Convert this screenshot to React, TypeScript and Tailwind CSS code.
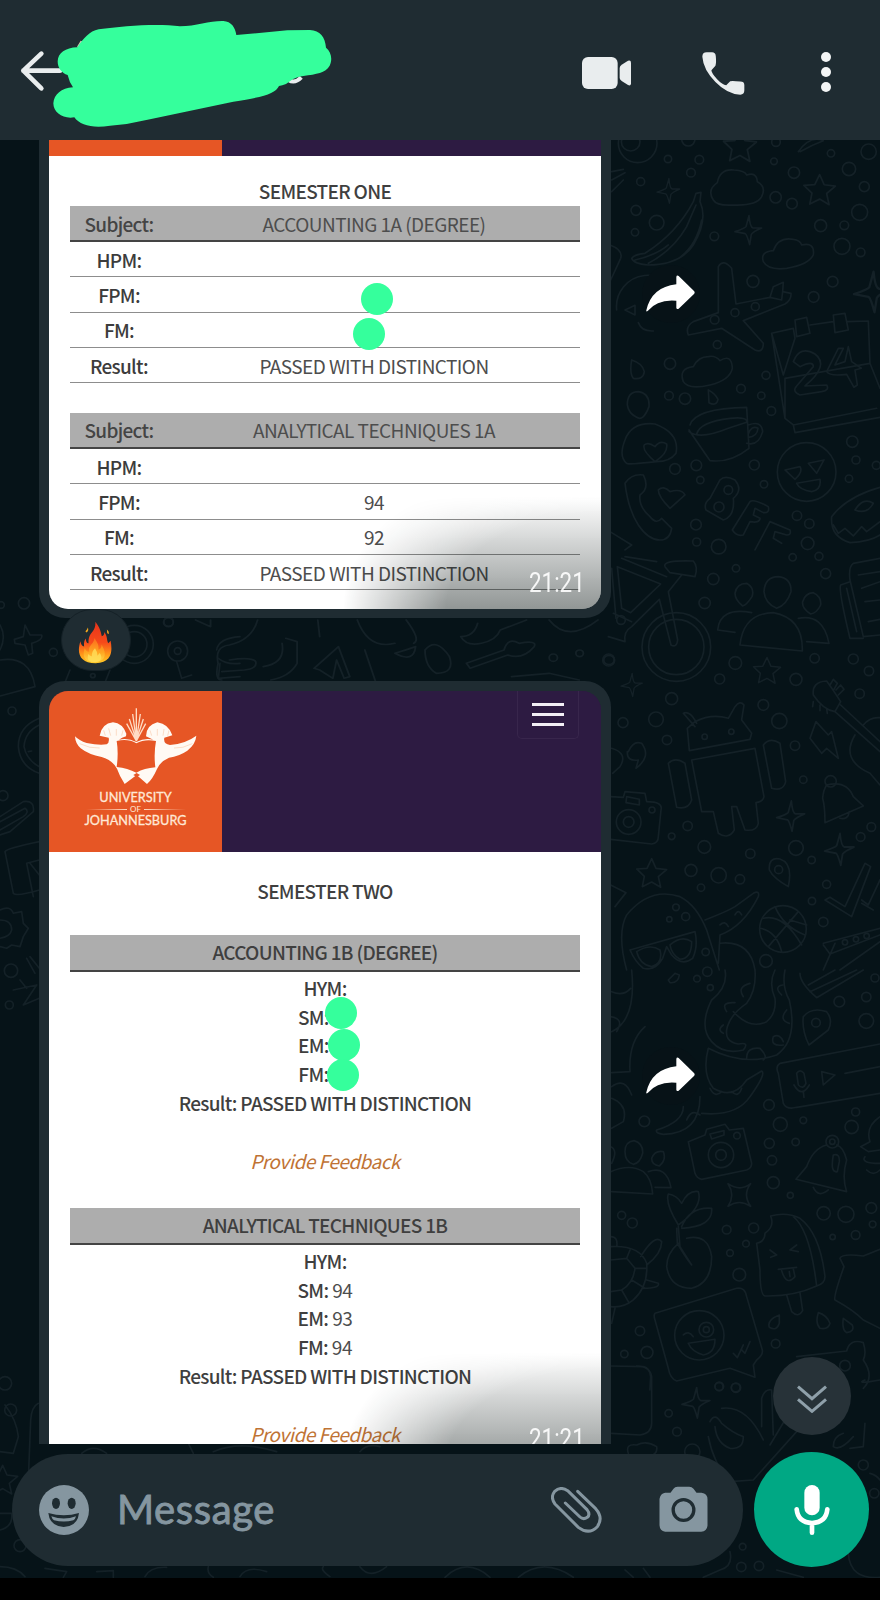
import React from "react";

const LABEL = "font-['Noto_Sans_CJK_SC','Noto_Sans',sans-serif]";

function Wallpaper() {
  const ring = (c: number[], i: number) => <circle key={i} cx={c[0]} cy={c[1]} r={c[2]} />;
  const sparkle = (c: number[], i: number) => (
    <path key={i} transform={`translate(${c[0]} ${c[1]}) scale(${c[2]})`} d="M2-45Q5-10 14-8L40-8Q14 3 9 11L4 42Q-4 12-9 9L-40 3Q-10-7-7-12Z" />
  );
  const star = (c: number[], i: number) => (
    <path key={i} transform={`translate(${c[0]} ${c[1]}) scale(${c[2]})`} d="M0-44L13-15 45-11 20 10 27 42 0 26-28 40-22 9-45-13-14-15Z" />
  );
  return (
    <svg className="absolute inset-0 h-[1578px] w-[880px]" viewBox="0 0 880 1578" fill="none" stroke="#142127" strokeWidth="5" strokeLinecap="round" strokeLinejoin="round">
      <g transform="translate(600 130) scale(.3333)">
        {[[113,40,58],[92,35,28],[265,28,20],[204,87,11],[298,89,13],[273,128,13],[122,155,12],[108,241,15],[170,278,22],[105,307,11],[343,319,13],[527,202,17],[576,221,16],[582,128,17],[522,94,10],[528,36,13],[693,70,11],[806,65,23],[747,117,20],[793,170,15],[779,247,24],[662,287,18],[733,286,13],[726,349,24],[782,367,13],[459,454,18],[698,455,16],[641,501,16],[466,530,12],[405,548,12],[344,569,13],[352,644,12],[210,701,17],[498,736,12],[423,776,13],[484,797,11],[514,843,13],[207,797,13],[255,806,17],[757,935,17],[768,990,12],[747,1046,11],[829,1006,12],[463,1005,15],[289,1006,16],[225,1017,16],[301,1050,11],[492,1063,11],[288,1184,16],[290,1236,12],[591,1157,14],[628,1181,14],[623,1240,19],[356,1250,22],[620,1026,88],[385,1080,13],[357,1131,15]].map(ring)}
        {[[205,184,.85],[445,302,1],[818,488,1.4]].map(sparkle)}
        {[[420,48,1.1],[659,180,1.05]].map(star)}
        <path d="M340 210Q320 180 352 158Q360 115 402 120Q435 122 440 135Q470 125 472 155Q500 170 485 200Q470 228 400 225Q350 228 340 210ZM490 395Q480 365 520 362Q535 320 580 328Q600 330 605 345Q645 335 640 375Q625 405 560 415Q505 422 490 395ZM250 755Q235 715 280 710Q295 680 325 680Q345 675 360 692Q395 670 397 715Q390 750 330 765Q265 780 250 755Z" />
        <path d="M288 190L303 187 300 215Q325 270 280 345Q240 405 145 405Q100 402 95 385Q102 373 135 370Q230 310 280 215ZM145 400Q220 360 260 290L288 225M105 390Q170 375 205 345M240 382Q290 345 305 270" />
        <path d="M355 548L355 410Q370 385 395 415L408 522 510 502 520 470 550 457 548 485 573 490Q575 510 555 522L430 572 490 640Q490 670 465 660L365 595 265 615Q255 590 280 575ZM510 502L545 510 548 485" />
        <path d="M50 540A93 93 0 1 1 237 520M115 578Q125 605 160 603M75 540L105 526 105 555ZM30 345Q70 360 62 385L32 450M95 690Q88 730 100 745Q130 750 133 725Q128 700 95 690ZM82 825Q82 785 115 785Q150 790 147 830Q130 875 110 862Q85 850 82 825ZM325 780L327 818Q350 830 354 808Q345 790 325 780Z" />
        <path d="M515 610L580 595 585 625 550 735ZM585 570L620 562 630 610 590 620ZM630 585L700 575M700 555L735 550 745 600 705 608ZM742 575L805 573 810 700 555 745 555 865 580 885 830 835M515 610L555 865M580 885L585 908 840 862M810 700L840 775" />
        <path d="M580 695Q600 645 645 672Q690 705 615 768L680 765Q690 780 665 785L600 795Q575 785 590 768L640 710Q640 690 600 710ZM715 655L680 725Q690 740 740 733L762 772 772 765 765 720 784 715 755 695 745 650 735 695 705 705 730 655Z" />
        <path d="M270 885Q285 835 440 832L447 955Q390 1000 330 992Q270 905 267 900M267 905Q300 930 385 895L440 877Q445 860 390 865Q300 875 290 912M445 885Q485 870 488 905Q475 950 440 940M445 912Q455 885 474 895Q472 920 445 922" />
        <path d="M80 1000Q55 980 75 930Q95 875 165 882Q240 910 228 970Q210 995 170 995Q80 1005 80 1000ZM165 995Q125 960 133 945Q145 935 165 950Q180 930 200 942Q205 970 165 995ZM75 1060Q95 1030 130 1035Q150 1075 120 1095Q115 1130 150 1160Q170 1185 185 1165L215 1195Q210 1230 180 1230Q145 1230 115 1185Q85 1140 75 1060ZM175 1080Q190 1065 210 1085Q245 1075 255 1095L210 1135Q175 1100 175 1080Z" />
        <path d="M555 1020L600 1010Q610 1025 585 1048ZM625 1000L672 990 650 1030ZM590 1060L660 1048Q665 1080 635 1085Q600 1080 590 1060ZM360 1050Q375 1035 405 1050Q430 1080 400 1105Q405 1160 370 1170L318 1140Q310 1120 330 1105ZM450 1115Q460 1105 505 1130Q510 1150 490 1148L465 1135 460 1155 480 1165Q480 1180 450 1175L430 1215Q410 1220 397 1200ZM510 1175L570 1200Q575 1215 560 1215L525 1205 520 1225 545 1240M510 1175L465 1260M840 1072Q740 1100 695 1160Q690 1220 750 1238Q810 1235 840 1215M700 1185L715 1210 735 1195 760 1218 785 1190 800 1205 840 1175M765 1140Q790 1100 820 1120Q800 1155 765 1140M30 1205L95 1245 75 1260M595 65Q630 15 670 32Q635 45 600 65M35 125L70 118M35 150L75 128M35 185L70 150" />
      </g>
      <g transform="translate(600 550) scale(.3333)">
        {[[340,87,17],[314,159,17],[408,55,11],[578,22,11],[657,19,12],[677,71,15],[26,330,18],[215,446,18],[406,339,19],[359,387,15],[588,388,18],[644,325,14],[760,327,15],[807,363,14],[779,431,14],[490,465,16],[168,508,22],[69,518,15],[201,570,14],[538,513,23],[585,587,14],[610,689,11],[313,891,19],[263,828,14],[215,859,10],[451,911,14],[588,894,22],[635,930,11],[273,961,18],[356,976,23],[420,988,14],[303,1013,11],[782,861,13],[814,831,13],[680,1003,12],[636,1053,11],[670,1116,14],[228,1072,10],[257,1100,12],[208,1108,8],[317,1206,11],[498,1233,19],[229,291,103],[229,291,83],[86,816,37],[86,816,16],[156,780,9],[314,560,8],[394,545,8],[536,959,12],[549,1137,70],[692,694,17],[735,1177,8],[768,1168,8],[800,1158,8],[63,210,13]].map(ring)}
        {[[95,406,.8],[572,800,1.05],[718,900,1.1]].map(sparkle)}
        {[[501,362,.9],[155,970,1]].map(star)}
        <path d="M52 50L182 102 92 188 65 175ZM35 55L48 205M65 25L200 80M195 50Q185 30 280 33Q295 50 285 80L210 68ZM245 75L205 125 233 270Q230 295 213 285L178 148 95 230Q70 245 75 275L25 260M40 190L95 215M75 20L170 35" />
        <path d="M405 130Q410 100 440 100Q465 115 456 140Q440 165 428 168Q405 150 405 130ZM492 125Q495 80 535 80Q575 85 573 125Q560 165 530 175Q495 160 492 125ZM608 155Q615 130 640 128Q665 140 662 165Q650 190 632 192Q605 175 608 155ZM420 285Q430 190 520 188Q610 205 607 303ZM405 247L353 240Q360 170 455 188M595 205Q670 190 687 280L620 275M840 25L760 40Q745 50 750 90L790 260 840 255M750 95L722 105Q715 120 750 265L790 265M740 115L770 245M775 75L840 65M785 115L840 95M795 155L840 150M805 215L840 208" />
        <path d="M262 535L285 515Q335 490 385 505L405 470Q420 450 432 465L425 510 455 550 450 568 268 602ZM285 530L250 490Q270 480 290 520M275 630L465 595 492 740Q490 755 468 758L475 820Q470 845 435 840L410 770 395 770 403 840Q385 870 355 850L340 785 305 785ZM205 640Q225 620 255 640L275 750Q265 780 230 772ZM490 585Q510 560 540 580L557 695Q550 725 515 715ZM85 605Q100 570 125 580Q155 620 108 655L115 630Q80 635 82 605M35 595Q85 610 60 650L38 670M32 740L70 742 75 725 135 730 140 755Q190 755 183 780L175 860Q175 880 155 882L32 868M80 740L118 748 118 765 78 758Z" />
        <path d="M640 435Q635 395 680 393Q700 420 722 455L705 485Q670 480 640 435ZM722 465L840 575M705 485L840 605M690 405L700 388 712 400 702 418M708 420L722 405 732 418 715 435M640 455L638 470M660 465L660 482M680 475L682 490M790 525Q810 500 840 503M765 555Q720 630 810 670L840 705M648 515L685 555 695 545 715 625 680 595 665 610 630 565ZM680 705Q740 690 760 740L790 768 675 818Q675 770 668 745Q670 720 680 705M720 805Q745 810 748 785M675 1050L690 1042 735 1070 795 940 812 950 755 1100ZM785 1050L805 1065 840 990M785 1060L820 1080" />
        <path d="M80 1260Q50 1150 80 1095Q150 1010 240 1040Q290 1065 320 1140L358 1260M90 1200L285 1145Q295 1190 278 1225Q245 1250 215 1215L200 1190 188 1225Q165 1265 130 1255Q105 1235 90 1200M110 1205Q150 1180 180 1200Q190 1240 155 1250Q120 1245 110 1205M210 1185Q245 1155 275 1175Q275 1225 240 1228Q215 1215 210 1185M315 1110Q380 1085 405 1070L460 1030Q480 1020 475 1040Q430 1130 360 1155L355 1240M360 1125Q375 1110 385 1130M405 1095Q415 1075 425 1095M360 1180Q450 1170 465 1260M490 1105Q550 1090 605 1185M525 1070Q550 1130 615 1155M482 1135Q530 1145 545 1205M595 1085L505 1190M570 1110L620 1125M670 1180L840 1135M670 1185L690 1212 840 1155M705 1180L670 1260M720 1260L840 1175M508 960Q505 920 540 927Q580 940 565 1010Q520 985 508 960M32 1005L78 1028 45 1070" />
      </g>
      <g transform="translate(600 970) scale(.3333)">
        {[[322,5,14],[291,26,10],[331,53,9],[825,24,12],[718,95,16],[799,81,14],[799,153,22],[648,158,13],[507,405,16],[541,463,21],[610,451,10],[767,426,12],[755,471,20],[508,520,15],[587,516,11],[516,571,14],[520,638,18],[571,676,9],[133,454,16],[363,555,38],[363,555,16],[411,497,10],[697,515,19],[697,515,8],[671,730,20],[738,733,24],[814,714,16],[818,763,10],[767,795,13],[698,801,8],[461,774,15],[380,779,13],[438,821,10],[390,849,10],[418,914,19],[65,736,12],[97,759,15],[120,1083,14],[141,1147,18],[73,1152,11],[527,1121,13],[298,1096,74],[319,1079,22],[319,1079,9],[357,1250,12],[407,1253,13],[735,1187,16]].map(ring)}
        <path transform="translate(418 675) rotate(45)" d="M0-48Q5-8 48 0Q8 8 0 48Q-8 8-48 0Q-5-8 0-48Z" />
        <path d="M375 0Q385 50 335 90Q295 170 335 215Q370 255 430 240Q450 215 415 222Q370 215 382 170Q395 130 440 100Q470 60 465 0M525 0Q505 40 525 85Q530 130 500 155Q450 180 400 125M555 0Q545 50 568 90Q595 210 530 255Q430 290 325 235Q305 310 340 355Q400 390 440 330L485 303Q500 310 450 380Q410 440 305 430M430 80Q410 50 450 40M380 125Q360 95 405 98M370 190Q350 180 370 165M545 75Q520 50 548 45M568 160Q535 150 560 120M550 225Q510 230 520 200Q540 190 550 215M440 265Q440 230 480 235Q505 260 490 270M330 355Q345 385 365 365M395 365Q415 385 425 355M95 0Q110 150 35 185M35 65Q70 80 92 55M30 140Q75 145 50 185M135 170Q85 215 90 305L35 308M35 350Q75 320 95 375M35 385Q85 405 70 455L35 475M300 380Q300 490 190 493Q165 490 170 480Q250 455 250 410M260 450Q275 415 300 435" />
        <path d="M600 10Q600 40 650 83L790 0M630 65L770 0M625 45L705 0M610 140Q635 110 680 125Q700 150 685 180L627 225Q605 180 610 140M840 222L540 280Q525 290 535 310L550 400Q560 420 590 412L840 370M590 310Q600 295 612 310L618 340Q610 360 595 345ZM582 345Q605 385 628 345M610 365L612 382M665 305L705 315 670 345ZM735 310L840 290M265 515L315 495 320 478 375 463 388 480 430 475 455 580Q455 595 440 600L305 628Q290 625 285 610ZM330 492L372 482 372 495 335 507ZM680 525Q640 535 620 590L588 628 740 665Q725 620 740 570Q730 530 710 525M640 652Q655 685 685 660M700 555Q720 550 718 575L712 605Q690 610 700 555M840 440Q795 470 810 515L782 530 805 545 840 540M795 560Q780 580 840 580M800 600Q820 620 840 600" />
        <path d="M75 545Q75 515 102 512Q130 520 128 550Q120 580 100 583Q75 575 75 545ZM155 565Q165 540 190 545Q200 570 178 588Q155 585 155 565ZM32 605Q90 580 130 605Q155 625 158 672L35 665M145 605Q200 585 213 653L165 652M32 530Q55 540 35 580M235 765Q195 700 205 672Q230 675 245 700Q265 660 295 665Q310 710 235 765ZM245 770Q270 710 335 715Q340 770 245 775M235 770L240 830 275 885M230 775L232 820Q255 860 275 885M235 820Q200 850 200 890Q210 955 275 955Q335 940 335 860Q325 790 260 805M470 820Q495 815 495 790Q525 770 512 738Q560 725 600 745Q660 790 675 920Q675 940 650 948Q580 980 495 978Q480 975 480 900ZM580 740Q630 780 650 948M560 975L575 1025Q595 1045 608 1022L600 968M510 840L530 855 512 862M590 825L570 840 595 845M535 898L590 892M545 902Q560 950 585 920L580 897M568 905L570 920" />
        <path d="M840 838L790 858Q725 850 720 865L732 890Q700 980 705 990Q760 1020 790 1050L840 1075M32 830Q120 825 140 880Q145 950 100 990Q70 1015 32 1010M32 870L80 865 105 895Q100 940 65 960L32 965M80 865L90 840M105 895L140 895M95 930L135 955M65 960L85 995M122 860Q165 790 185 815Q185 850 140 885M140 930L175 940Q180 955 130 955M32 800Q55 800 50 830M45 1015L35 1060M165 1030L410 955Q435 950 440 980L487 1140Q490 1155 470 1170L460 1185 465 1222 390 1195 230 1233Q210 1225 205 1195L165 1050Q160 1035 165 1030ZM265 1120L345 1108Q345 1150 310 1155Q275 1145 265 1120M250 1095Q265 1080 280 1100M400 1150L412 1163 430 1125M425 1140L435 1150 450 1115M538 1035Q500 1050 508 1072Q530 1085 538 1060ZM655 1028Q645 1060 660 1075Q685 1080 690 1060Q680 1035 655 1028ZM730 1045Q725 1080 740 1088Q765 1085 757 1065ZM590 1160L740 1143Q750 1105 790 1118Q800 1150 790 1170Q825 1220 790 1255M32 1188L130 1190Q150 1195 152 1220L150 1260M205 30L225 10 238 15Q235 40 210 38Z" />
      </g>
      <g transform="translate(440 1340) scale(.3333)">
        {[[686,220,11],[711,275,13],[838,139,13],[888,143,14],[757,335,23],[1270,375,15],[1303,460,14],[908,620,10],[904,681,14],[957,678,14]].map(ring)}
        {[[768,190,1.05]].map(sparkle)}
        <path d="M515 280L600 285Q635 280 635 250L635 110Q630 78 590 78M810 245Q825 215 845 250Q880 280 910 290Q910 330 870 325Q830 310 825 260M805 290Q820 370 870 425L940 420 1070 275M845 205Q920 195 970 300M965 260L965 175Q975 145 995 150L1000 285M1035 240L990 315M1110 500Q1130 480 1220 475M565 340Q555 310 590 315Q620 300 650 320Q655 345 620 350M1275 120Q1250 130 1290 125L1320 120M1290 400Q1310 405 1320 420M1225 640Q1230 720 1320 712M870 635Q880 680 840 690L790 712M1240 290Q1200 335 1180 320 1180 290 1210 280M1275 250L1270 320 1230 325M555 690L580 712M610 685L630 712M15 712Q80 650 150 712M235 712Q310 650 400 712M1010 690L1090 712" />
      </g>
      <g transform="translate(0 600) scale(.3333)">
        {[[72,10,17],[3,15,10],[160,157,12],[36,333,12],[9,587,15],[33,1112,20],[28,1215,12],[403,133,57],[403,133,38],[533,153,30],[533,153,10],[506,65,14]].map(ring)}
        <path d="M75 75L90 105 125 105Q130 120 95 130L98 160 85 165 75 135 45 130 43 118 70 110ZM0 75Q20 110 0 150M0 180Q90 165 105 260L0 288M118 355Q55 380 55 440Q60 500 118 520M118 375Q75 395 72 440Q80 480 118 500M85 455L95 453M0 650L70 605Q105 600 100 635L30 695 0 705M0 665L75 625Q90 635 70 650L0 690M15 755Q20 745 118 725M15 755L40 880Q50 890 118 870M118 780L80 790 100 890M90 790L118 825M0 930Q30 915 40 940L65 935 70 970 85 985 70 1010 60 1040 35 1035 20 1045 0 1040M0 960Q35 960 35 990Q30 1010 0 1015M80 1075L105 1120M90 1070L118 1105M40 1170L110 1155 70 1215 118 1195M60 1140L80 1165M530 185L545 235 575 225M210 210L190 260M330 210L310 260M650 150Q655 115 720 110M655 175Q680 195 720 190M660 190L655 235 720 230" />
      </g>
      <g transform="translate(30 390) scale(.3762 .3333)">
        <path d="M440 690L480 710 480 690M500 820Q490 770 530 765Q590 750 605 690M500 820Q490 870 510 870M530 810Q590 800 600 815 605 835 570 840L510 845M620 830Q680 820 670 760M680 745L710 755 710 820Q690 860 640 870M765 690L770 740M755 835L820 770 850 860 835 865 815 810 805 865 770 840ZM870 690Q900 780 970 760M890 780L920 880M1000 690Q1040 750 1020 760M970 790Q1000 780 1025 770Q1020 820 970 790M1050 780Q1080 740 1115 800Q1130 850 1080 850 1050 830 1050 780M1145 740Q1160 770 1200 760Q1240 750 1250 720L1320 690M1145 740Q1180 740 1190 700M1160 820L1260 780Q1270 740 1300 760Q1350 750 1340 770Q1310 810 1270 795L1170 835ZM1380 690Q1430 760 1510 690M1280 860L1380 850 1460 870" />
        {[[1391,803,11],[1461,790,10],[1539,810,14],[368,697,13],[167,857,6]].map(ring)}
      </g>
      <g transform="translate(0 1380) scale(.3333)">
        {[[32,90,18],[60,497,18],[15,10,20]].map(ring)}
        {[[8,300,1]].map(star)}
        <path d="M15 75Q50 120 55 170L40 220 0 215M115 70Q95 80 92 120L85 300M0 400L35 400Q40 440 0 450M245 220Q280 190 320 220M560 180L580 220M640 215Q720 180 830 215M1080 215Q1100 190 1140 200M0 560Q50 560 75 590M135 565L200 575 190 592M290 575L340 572 340 592M625 560Q620 580 640 592M720 590Q740 555 800 575M435 590Q450 560 500 562M990 590Q960 570 970 560M1080 560Q1110 600 1160 560" />
      </g>
    </svg>
  );
}

function Header() {
  return (
    <header className="relative flex h-[140px] shrink-0 items-center bg-[#1f2c32]">
      <svg className="h-[140px] w-[440px] shrink-0" viewBox="0 0 1320 420" fill="none">
        <path d="M180 212H70M124 161L70 212L124 265" stroke="#e9edee" strokeWidth="14" strokeLinecap="round" strokeLinejoin="round" />
        <path d="M231 140L242 122 250 125 238 142Z" fill="#e3c3b4" />
        <path d="M866 240Q884 252 904 232" stroke="#e9edee" strokeWidth="12" />
        <path fill="#35ff9c" d="M232 142C250 116 268 93 296 88C370 78 470 70 540 79C590 78 630 62 670 63C694 64 706 83 709 105L862 91L930 90C960 91 976 112 978 143C994 156 998 178 989 197C976 219 950 222 910 228C882 232 874 241 858 252Q846 257 837 258C825 282 790 291 700 305L450 358L380 372L330 377C280 386 240 376 223 352C190 358 160 338 160 310C162 283 184 264 219 262Q208 247 203 225C185 220 173 204 173 184C174 159 196 143 232 142Z" />
      </svg>
      <svg className="mt-[6px] ml-[142px] h-8 w-[50px] shrink-0" viewBox="0 0 150 96" fill="#e9edee">
        <rect x="0" y="0" width="107" height="96" rx="18" />
        <path d="M113 33Q113 27 119 23L138 11Q147 8 147 17V80Q146 88 138 84L119 72Q113 68 113 63Z" />
      </svg>
      <svg className="mt-[6px] ml-[70px] h-[43px] w-[43px] shrink-0" viewBox="0 0 128 128" fill="#e9edee">
        <path d="M1 14Q1 1 14 1H30Q40 1 41 12Q43 31 40 41L28 54Q28 62 45 81Q61 98 72 99L84 87Q90 85 114 88Q126 88 126 98V114Q126 127 114 127Q75 125 40 89Q4 53 1 14Z" />
      </svg>
      <div className="mt-[4px] ml-[76px] flex flex-col gap-[5px]">
        <i className="size-[10px] rounded-full bg-[#f4f6f6]" />
        <i className="size-[10px] rounded-full bg-[#f4f6f6]" />
        <i className="size-[10px] rounded-full bg-[#f4f6f6]" />
      </div>
    </header>
  );
}

function Stamp() {
  return (
    <>
      <div className="absolute right-0 bottom-0 h-[112px] w-[260px] bg-linear-to-t from-[#0b1614]/45 to-transparent [mask-image:radial-gradient(ellipse_258px_160px_at_100%_100%,black_60%,transparent_100%)]" />
      <span className="absolute right-[16px] bottom-[9px] origin-right scale-x-[.8] font-[Roboto] text-[28px] leading-[34px] font-normal text-white/90">21:21</span>
    </>
  );
}

function Dot({ pos }: { pos: string }) {
  return <i className={`absolute size-8 rounded-full bg-[#35ff9c] ${pos}`} />;
}

function Row({ label, value, dot }: { label: string; value?: string; dot?: string }) {
  return (
    <div className="flex h-[35.3px] items-center border-b border-[#8d8d8d] text-[19px] leading-[33px] tracking-[-.55px] text-[#4d4d4d]">
      <b className="w-[98px] text-center font-medium tracking-[-.7px] text-[#3c3c3c]">{label}</b>
      <span className="relative flex-1 text-center">
        {value ?? "\u00a0"}
        {dot && <Dot pos={dot} />}
      </span>
    </div>
  );
}

function Marks({ subject, rows }: { subject: string; rows: { label: string; value?: string; dot?: string }[] }) {
  return (
    <section className="mx-[21px] w-[510px]">
      <div className="flex h-9 items-center border-b-2 border-[#444] bg-[#adadad] text-[19px] leading-[33px] tracking-[-.55px] text-[#4d4d4d]">
        <b className="w-[98px] text-center font-medium tracking-[-.7px] text-[#444]">Subject:</b>
        <span className="flex-1 text-center">{subject}</span>
      </div>
      {rows.map((r) => (
        <Row key={r.label} {...r} />
      ))}
    </section>
  );
}

function Module({ title, marks }: { title: string; marks: { label: string; value?: string; dot?: string }[] }) {
  return (
    <section className="mx-[21px] h-[273px] w-[510px] text-center text-[19px] tracking-[-.7px] text-[#3f3f3f]">
      <h3 className="mb-[2px] h-[37px] border-b-2 border-[#444] bg-[#adadad] leading-[33px] font-medium">{title}</h3>
      {marks.map((m) => (
        <p key={m.label} className="relative h-[28.7px] leading-[28px]">
          <b className="font-medium">{m.label}</b>
          {m.value && <span className="tracking-[-.4px] text-[#4d4d4d]"> {m.value}</span>}
          {m.dot && (
            <>
              <span className="invisible"> 90</span>
              <Dot pos={m.dot} />
            </>
          )}
        </p>
      ))}
      <p className="h-[28.7px] leading-[28px] font-medium">Result: PASSED WITH DISTINCTION</p>
      <p className="mt-[28.7px] leading-[29px] tracking-[-.5px] text-[#bf7334] italic">Provide Feedback</p>
    </section>
  );
}

function Crest() {
  return (
    <div className="flex h-full w-[173px] flex-col items-center bg-[#e65625] pt-[16px]">
      <svg className="h-[78px] w-[124px]" viewBox="130 92 372 234" fill="#fffaf4">
        <path d="M133 180Q145 193 168 200Q205 208 228 204Q237 199 234 184L207 178Q213 142 247 138Q276 141 287 172L286 180Q273 184 265 190Q292 184 317 197Q342 184 368 190L346 180Q347 146 380 138Q414 143 425 177L401 184Q397 203 418 206Q465 202 497 178Q495 203 470 223Q445 240 415 244Q388 256 379 278Q365 310 349 323L318 296L282 323Q267 300 259 277Q244 250 213 242Q174 235 150 216Q134 202 133 180Z" />
        <path fill="#e65625" d="M258 194Q292 186 317 201Q342 187 376 194Q369 232 374 273Q341 276 317 289Q291 276 258 272Q264 230 258 194Z" />
        <path fill="#e65625" d="M308 296L318 290 328 296 318 302Z" />
        <path d="M317 194L288 142M317 192L296 128M317 192L306 113M317 192V96M317 192L329 113M317 192L338 128M317 194L345 142" stroke="#ffdcc4" strokeWidth="4" />
        <path d="M147 202Q178 217 207 215M485 202Q456 217 430 215M224 178L219 162M240 178L234 156M257 178V158M273 178L277 162M363 178L358 162M380 178V158M397 178L400 158M411 178L415 162" fill="none" stroke="#f9cdb0" strokeWidth="2" />
      </svg>
      <div className="mt-[4px] text-center font-[Lato] text-[12.7px] leading-[17px] text-[#ffe8d6] [-webkit-text-stroke:.3px_#ffe8d6]">UNIVERSITY</div>
      <div className="flex h-[6px] w-[100px] items-center gap-[3px] font-[Lato] text-[8px] leading-[8px] text-[#ffe8d6]">
        <i className="h-px flex-1 bg-linear-to-r from-transparent to-[#ffd9bf]" />
        OF
        <i className="h-px flex-1 bg-linear-to-l from-transparent to-[#ffd9bf]" />
      </div>
      <div className="text-center font-[Lato] text-[12.7px] leading-[17px] text-[#ffe8d6] [-webkit-text-stroke:.3px_#ffe8d6]">JOHANNESBURG</div>
    </div>
  );
}

function Forward({ top }: { top: string }) {
  return (
    <div className={`ml-[31px] flex h-[58px] w-[58px] items-center justify-center rounded-full bg-[#071217] ${top}`}>
      <svg className="h-[38px] w-[50px]" viewBox="0 0 150 114" fill="#fff">
        <path d="M5 108Q0 111 1 106Q17 36 91 28V6Q92-1 98 3L144 48Q148 52 144 57L98 101Q92 104 91 99V77Q34 72 5 108Z" />
      </svg>
    </div>
  );
}

function Fire() {
  return (
    <svg className="mt-1 mr-[3px] h-[43px] w-[34px]" viewBox="0 0 100 126" preserveAspectRatio="none">
      <defs>
        <linearGradient id="fire" x1="0" y1="0" x2="0" y2="1">
          <stop offset="0" stopColor="#e8331b" />
          <stop offset=".5" stopColor="#f64a1a" />
          <stop offset=".8" stopColor="#ff9b19" />
          <stop offset="1" stopColor="#ffca28" />
        </linearGradient>
        <linearGradient id="ember" x1="0" y1="0" x2="0" y2="1">
          <stop offset="0" stopColor="#fb6a1c" />
          <stop offset=".6" stopColor="#ffa822" />
          <stop offset="1" stopColor="#ffd94a" />
        </linearGradient>
      </defs>
      <path fill="url(#fire)" d="M51 2C63 18 67 29 70 45C76 44 78 37 77 32C87 44 84 56 89 65L96 58C101 86 102 122 52 124C4 123-4 94 7 59C9 69 12 73 18 75C17 65 18 56 23 51C23 61 27 66 31 65C30 48 36 39 43 31C49 23 52 14 51 2Z" />
      <path fill="url(#ember)" d="M48 50C60 66 61 74 60 84C67 83 70 76 69 69C81 89 89 116 51 121C13 121 14 97 20 79C23 87 28 91 33 90C29 70 47 70 48 50Z" />
      <path fill="#ffdf5a" fillOpacity=".8" d="M50 80Q58 91 57 102L64 94Q78 117 50 121Q21 120 31 97Q34 104 41 103Q40 89 50 80Z" />
      <path d="M22 30Q28 24 29 19Q33 29 24 34ZM85 25Q92 30 91 38L86 36Z" fill="#f2a81d" />
    </svg>
  );
}

function Composer() {
  return (
    <footer className="relative flex h-[134px] shrink-0 items-start pt-[8px] pl-3">
      <div className="mt-[2px] flex h-28 w-[731px] items-center rounded-full bg-[#1f2c32] pr-[35px] pl-[27px] text-[#8596a0]">
        <svg className="size-[50px]" viewBox="0 0 150 150">
          <circle cx="75" cy="75" r="75" fill="#8596a0" />
          <g fill="#1f2c32">
            <ellipse cx="51" cy="55" rx="12" ry="17" />
            <ellipse cx="98" cy="55" rx="12" ry="17" />
            <path d="M28 84Q75 98 120 84Q116 124 74 126Q32 123 28 84Z" />
          </g>
          <path d="M37 94Q75 107 111 94Q109 103 103 106Q75 113 45 106Q39 102 37 94Z" fill="#8596a0" />
        </svg>
        <span className="-mt-[2px] ml-[28px] flex-1 font-[Lato] text-[40px] leading-[50px] font-normal tracking-[.6px] [-webkit-text-stroke:.9px_#8596a0]">Message</span>
        <svg className="mr-[57px] h-[46px] w-[51px]" viewBox="0 0 153 138" fill="none" stroke="#8596a0" strokeWidth="9" strokeLinecap="round" strokeLinejoin="round">
          <path d="M80 13L134 65Q158 92 139 119Q114 145 82 121L12 51Q-3 31 11 13Q29-3 50 11L108 68Q119 82 109 91Q97 99 87 90L43 48" />
        </svg>
        <svg className="-mt-[3px] h-[46px] w-[49px]" viewBox="0 0 146 138">
          <path fill="#8596a0" d="M18 20H34L43 8Q47 2 55 2H90Q98 2 103 8L112 20H127Q145 22 145 40V119Q143 136 126 137H18Q2 135 1 118V39Q3 23 18 20Z" />
          <circle cx="73" cy="72" r="31" fill="none" stroke="#1f2c32" strokeWidth="10" />
        </svg>
      </div>
      <button className="ml-[11px] flex size-[115px] items-center justify-center rounded-full bg-[#00a884]">
        <svg className="h-[50px] w-9" viewBox="0 0 108 150">
          <rect x="31" y="0" width="46" height="91" rx="23" fill="#fff" />
          <path d="M8 73Q12 113 54 114Q96 113 100 73M54 114V143" fill="none" stroke="#fff" strokeWidth="14" strokeLinecap="round" />
        </svg>
      </button>
    </footer>
  );
}

export default function App() {
  return (
    <div className={`relative flex h-[1600px] w-[880px] flex-col overflow-hidden bg-[#061318] ${LABEL}`}>
      <Wallpaper />
      <Header />
      <main className="relative h-[1304px] overflow-hidden pl-[39px]">
        <div className="flex">
          <article className="h-[478px] w-[572px] rounded-b-[26px] bg-[#1f2c32] px-[10px]">
            <div className="relative h-[469px] w-[552px] overflow-hidden rounded-b-[19px] bg-white">
              <div className="flex h-[15.5px]">
                <i className="w-[173px] bg-[#e65625]" />
                <i className="flex-1 bg-[#2d1b42]" />
              </div>
              <h2 className="h-[50.5px] pt-[20px] text-center text-[19px] leading-[30px] font-medium tracking-[-.7px] text-[#3f3f3f]">SEMESTER ONE</h2>
              <Marks
                subject="ACCOUNTING 1A (DEGREE)"
                rows={[
                  { label: "HPM:" },
                  { label: "FPM:", dot: "left-[193px] top-[5px]" },
                  { label: "FM:", dot: "left-[185px] top-[5px]" },
                  { label: "Result:", value: "PASSED WITH DISTINCTION" },
                ]}
              />
              <div className="h-[29.8px]" />
              <Marks
                subject="ANALYTICAL TECHNIQUES 1A"
                rows={[
                  { label: "HPM:" },
                  { label: "FPM:", value: "94" },
                  { label: "FM:", value: "92" },
                  { label: "Result:", value: "PASSED WITH DISTINCTION" },
                ]}
              />
              <Stamp />
            </div>
          </article>
          <Forward top="mt-[125px]" />
        </div>
        <div className="relative z-10 -mt-[9px] ml-[22px] flex h-[62px] w-[70px] items-center justify-center rounded-full border border-[#152127] bg-[#1f2c32]">
          <Fire />
        </div>
        <div className="mt-[10px] flex">
          <article className="h-[785px] w-[572px] shrink-0 rounded-t-[26px] bg-[#1f2c32] px-[10px] pt-[10px]">
            <div className="relative h-[774px] w-[552px] overflow-hidden rounded-t-[19px] bg-linear-to-b from-[#2d1b42] from-50% to-white to-50%">
              <div className="flex h-[161px]">
                <Crest />
                <div className="flex flex-1 items-start justify-end bg-[#2d1b42] pr-[22px]">
                  <div className="flex h-[48px] w-[62px] flex-col items-center gap-[7px] rounded-b-[5px] border border-t-0 border-[#38264c] pt-[12px]">
                    <i className="h-[3px] w-8 bg-[#f2eff5]" />
                    <i className="h-[3px] w-8 bg-[#f2eff5]" />
                    <i className="h-[3px] w-8 bg-[#f2eff5]" />
                  </div>
                </div>
              </div>
              <div className="h-[613px] bg-white">
                <h2 className="h-[83px] text-center text-[19px] leading-[78px] font-medium tracking-[-.7px] text-[#3f3f3f]">SEMESTER TWO</h2>
                <Module
                  title="ACCOUNTING 1B (DEGREE)"
                  marks={[
                    { label: "HYM:" },
                    { label: "SM:", dot: "left-[255px] -top-[6px]" },
                    { label: "EM:", dot: "left-[258px] -top-[2px]" },
                    { label: "FM:", dot: "left-[257px] -top-[1px]" },
                  ]}
                />
                <Module
                  title="ANALYTICAL TECHNIQUES 1B"
                  marks={[
                    { label: "HYM:" },
                    { label: "SM:", value: "94" },
                    { label: "EM:", value: "93" },
                    { label: "FM:", value: "94" },
                  ]}
                />
              </div>
              <Stamp />
            </div>
          </article>
          <Forward top="mt-[366px]" />
        </div>
        <button className="absolute right-[29px] bottom-[9px] flex size-[78px] items-center justify-center rounded-full bg-[#273238]">
          <svg className="mt-[6px] h-7 w-[30px]" viewBox="0 0 90 84" fill="none" stroke="#8fa0aa" strokeWidth="9">
            <path d="M3 5L45 41L87 5M3 43L45 79L87 43" />
          </svg>
        </button>
      </main>
      <Composer />
      <div className="relative h-[22px] shrink-0 bg-black" />
    </div>
  );
}
